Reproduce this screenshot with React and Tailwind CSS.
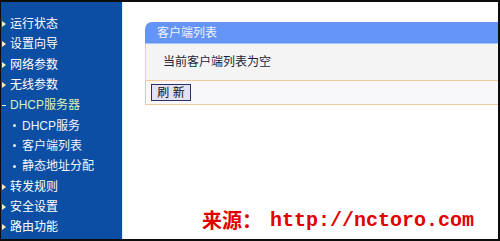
import React from 'react'

const MENU = [
  { label: '运行状态', kind: 'main' },
  { label: '设置向导', kind: 'main' },
  { label: '网络参数', kind: 'main' },
  { label: '无线参数', kind: 'main' },
  { label: 'DHCP服务器', kind: 'open' },
  { label: 'DHCP服务', kind: 'sub' },
  { label: '客户端列表', kind: 'sub' },
  { label: '静态地址分配', kind: 'sub' },
  { label: '转发规则', kind: 'main' },
  { label: '安全设置', kind: 'main' },
  { label: '路由功能', kind: 'main' },
]

function MenuItem({ item }) {
  if (item.kind === 'sub') {
    return (
      <div className="h-[20.3px] flex items-center">
        <span className="ml-[12px] w-[3px] h-[3px] rounded-full bg-[#e8f4d8]" />
        <span className="ml-[6px] text-[#f2f6ff]">{item.label}</span>
      </div>
    )
  }
  return (
    <div className="h-[20.3px] flex items-center">
      {item.kind === 'open' ? (
        <span className="ml-[1px] w-[4px] h-[1px] bg-[#f4f4c8]" />
      ) : (
        <svg width="4" height="6" viewBox="0 0 4 6" className="ml-[1px]">
          <path d="M0 0L4 3L0 6Z" fill="#f6f2c0" />
        </svg>
      )}
      <span className={`ml-[4px] ${item.kind === 'open' ? 'text-[#dcf0b8]' : 'text-white'}`}>
        {item.label}
      </span>
    </div>
  )
}

export default function App() {
  return (
    <div className="w-[500px] h-[241px] flex bg-white border-[#0d0d0d] border-t-2 border-r-2 border-b-2 border-l overflow-hidden font-['Liberation_Sans','Noto_Sans_CJK_SC',sans-serif] text-[12px] leading-none">
      {/* 左侧菜单 */}
      <aside className="w-[122px] shrink-0 bg-[#0b4ea4] border-r border-[#d8eef8] pt-[12px]">
        {MENU.map(m => (
          <MenuItem key={m.label} item={m} />
        ))}
      </aside>

      {/* 内容 */}
      <main className="flex-1 flex flex-col pt-[20px] pl-[22px]">
        <div className="flex flex-col">
          <div className="h-[22px] bg-[#6494f6] rounded-tl-[7px] border-b border-[#a8c8fc] flex items-center pl-[12px] text-[#eef3ff]">
            客户端列表
          </div>
          <div className="h-[36px] bg-[#f4f4f5] border-l border-[#f3d2ae] flex items-center pl-[17px] text-[#1c2438]">
            当前客户端列表为空
          </div>
          <div className="h-[25px] bg-[#f8f7fa] border-l border-t border-b border-[#f4c79c] flex items-center pl-[5px]">
            <button className="h-[17px] w-[40px] bg-[#e2e2f4] border border-[#2a3068] text-[#111] text-[12px] flex items-center justify-center">
              刷 新
            </button>
          </div>
        </div>

        {/* 来源 */}
        <div className="mt-auto pb-[6px] pl-[57px] flex items-center text-[#e00000] text-[20px] leading-[24px]">
          <span className="font-bold">来源：</span>
          <span className="ml-[8px] font-bold font-['Liberation_Mono',monospace]">http://nctoro.com</span>
        </div>
      </main>
    </div>
  )
}
